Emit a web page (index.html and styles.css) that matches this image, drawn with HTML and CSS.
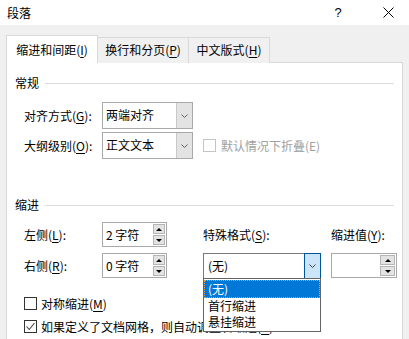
FILE: index.html
```html
<!DOCTYPE html>
<html lang="zh-CN">
<head>
<meta charset="utf-8">
<title>段落</title>
<link rel="stylesheet" href="styles.css">
</head>
<body>
<div class="titlebar">
  <span class="title">段落</span>
  <span class="help">?</span>
  <span class="close"><svg width="11" height="11" viewBox="0 0 11 11"><path d="M0.5 0.5 L10.5 10.5 M10.5 0.5 L0.5 10.5" stroke="#000" stroke-width="1" fill="none"/></svg></span>
</div>
<div class="dlg">
  <div class="tabs">
    <div class="tab active">缩进和间距(<u>I</u>)</div>
    <div class="tab t2">换行和分页(<u>P</u>)</div>
    <div class="tab t3">中文版式(<u>H</u>)</div>
  </div>
  <div class="panel">
    <div class="group-head"><span>常规</span><i class="rule"></i></div>
    <div class="form-row">
      <span class="lbl">对齐方式(<u>G</u>):</span>
      <div class="combo"><span class="val">两端对齐</span><span class="drop"><svg width="7" height="4" viewBox="0 0 7 4"><path d="M0.5 0.5 L3.5 3.5 L6.5 0.5" stroke="#606060" fill="none"/></svg></span></div>
    </div>
    <div class="form-row r2">
      <span class="lbl">大纲级别(<u>O</u>):</span>
      <div class="combo"><span class="val">正文文本</span><span class="drop"><svg width="7" height="4" viewBox="0 0 7 4"><path d="M0.5 0.5 L3.5 3.5 L6.5 0.5" stroke="#606060" fill="none"/></svg></span></div>
      <span class="check disabled"><span class="box"></span>默认情况下折叠(E)</span>
    </div>

    <div class="group-head g2"><span>缩进</span><i class="rule"></i></div>
    <div class="indent-grid">
      <span class="lbl">左侧(<u>L</u>):</span>
      <div class="spin"><span class="val">2 字符</span><span class="btns"><span class="up"></span><span class="dn"></span></span></div>
      <span class="lbl c4">特殊格式(<u>S</u>):</span>
      <span class="lbl c6">缩进值(<u>Y</u>):</span>

      <span class="lbl">右侧(<u>R</u>):</span>
      <div class="spin"><span class="val">0 字符</span><span class="btns"><span class="up"></span><span class="dn"></span></span></div>
      <div class="combo open c4">
        <span class="val">(无)</span>
        <span class="drop"><svg width="7" height="4" viewBox="0 0 7 4"><path d="M0.5 0.5 L3.5 3.5 L6.5 0.5" stroke="#404040" fill="none"/></svg></span>
        <ul class="droplist">
          <li class="sel">(无)</li>
          <li>首行缩进</li>
          <li>悬挂缩进</li>
        </ul>
      </div>
      <div class="spin wide c6"><span class="val"></span><span class="btns"><span class="up"></span><span class="dn"></span></span></div>
    </div>

    <span class="check c1"><span class="box"></span>对称缩进(<u>M</u>)</span>
    <span class="check c2"><span class="box"><svg width="11" height="11" viewBox="0 0 11 11"><path d="M1.5 5.5 L4.2 8.5 L9.5 2" stroke="#404040" stroke-width="1.1" fill="none"/></svg></span>如果定义了文档网格，则自动调整右缩进(<u>D</u>)</span>
  </div>
</div>
</body>
</html>
```

FILE: styles.css
```css
* { box-sizing: border-box; }
html, body { margin: 0; padding: 0; }
body {
  width: 409px;
  height: 339px;
  overflow: hidden;
  background: #f0f0f0;
  font-family: "Noto Sans CJK SC", "Microsoft YaHei UI", sans-serif;
  font-size: 12px;
  color: #000;
}
u { text-decoration: underline; text-underline-offset: 2px; }

.titlebar {
  height: 25px;
  background: #fff;
  display: flex;
  align-items: center;
  padding-left: 7px;
}
.title { flex: 1; line-height: 16px; }
.help {
  width: 16px;
  text-align: center;
  font-family: "Liberation Sans", sans-serif;
  font-size: 13px;
  margin-right: 27px;
}
.close { width: 30px; display: flex; justify-content: flex-start; padding-left: 10px; margin-right: 6px; }
.close svg { display: block; }

.dlg { padding: 10px 0 0 6px; }

.tabs { display: flex; align-items: flex-end; height: 28px; position: relative; z-index: 2; }
.tab {
  height: 26px;
  border: 1px solid #d9d9d9;
  border-bottom: none;
  background: #f0f0f0;
  line-height: 24px;
  text-align: center;
  width: 92px;
  margin-left: -1px;
}
.tab.active {
  height: 28px;
  background: #fff;
  margin-left: 0;
  line-height: 27px;
  position: relative;
  z-index: 2;
}
.tab.t3 { width: 82px; }

.panel {
  margin-top: -1px;
  width: 397px;
  height: 300px;
  border: 1px solid #d9d9d9;
  background: #fff;
  padding: 12px 0 0 8px;
  position: relative;
  z-index: 1;
}

.group-head {
  display: flex;
  align-items: center;
  height: 16px;
  line-height: 16px;
  padding-right: 8px;
}
.group-head .rule { flex: 1; height: 1px; background: #dcdcdc; margin-left: 6px; }
.group-head.g2 { margin-top: 38px; }

.form-row {
  display: flex;
  align-items: center;
  height: 27px;
  margin-top: 11px;
  padding-left: 9px;
}
.form-row.r2 { margin-top: 3px; }
.lbl { width: 78px; white-space: nowrap; line-height: 16px; }

.combo {
  width: 91px;
  height: 27px;
  border: 1px solid #a9a9a9;
  background: #fff;
  display: flex;
  align-items: stretch;
  position: relative;
}
.combo .val { flex: 1; padding-left: 3px; line-height: 24px; }
.combo .drop {
  width: 16px;
  background: #e3e3e3;
  border-left: 1px solid #c8c8c8;
  display: flex;
  align-items: center;
  justify-content: center;
}
.combo .drop svg { display: block; }

.check { display: flex; align-items: center; line-height: 16px; white-space: nowrap; }
.check .box {
  width: 13px;
  height: 13px;
  border: 1px solid #333;
  background: #fff;
  margin-right: 4px;
  display: flex;
  align-items: center;
  justify-content: center;
}
.check.disabled { color: #a0a0a0; margin-left: 10px; }
.check.disabled .box { border-color: #c4c4c4; margin-right: 5px; }

.indent-grid {
  display: grid;
  grid-template-columns: 78px 65px 36px 118px 10px 66px;
  grid-template-rows: 25px 25px;
  row-gap: 6px;
  margin-top: 9px;
  padding-left: 9px;
  align-items: center;
}
.indent-grid .c4 { grid-column: 4; }
.indent-grid .c6 { grid-column: 6; }

.spin {
  height: 25px;
  border: 1px solid #a9a9a9;
  background: #fff;
  display: flex;
  align-items: stretch;
}
.spin .val { flex: 1; padding-left: 3px; line-height: 23px; }
.spin .btns {
  width: 12px;
  margin: 1px 1px 1px 0;
  display: flex;
  flex-direction: column;
  gap: 1px;
}
.spin.wide .btns { width: 15px; }
.spin .up, .spin .dn {
  flex: 1;
  background: #e3e3e3;
  border: 1px solid #b4b4b4;
  display: flex;
  align-items: center;
  justify-content: center;
}
.spin .up::after {
  content: "";
  border-left: 3px solid transparent;
  border-right: 3px solid transparent;
  border-bottom: 3px solid #000;
}
.spin .dn::after {
  content: "";
  border-left: 3px solid transparent;
  border-right: 3px solid transparent;
  border-top: 3px solid #000;
}

.combo.open { width: 118px; height: 26px; border-color: #7a7a7a; }
.combo.open .val { line-height: 23px; padding-left: 4px; }
.combo.open .drop {
  width: 17px;
  background: #cce4f7;
  border: 1px solid #005499;
  margin: -1px -1px -1px 0;
}
.droplist {
  position: absolute;
  left: -1px;
  top: 100%;
  width: 118px;
  height: 54px;
  margin: 0;
  padding: 1px 0 0;
  list-style: none;
  background: #fff;
  border: 1px solid #646464;
  z-index: 5;
}
.droplist li { height: 16px; line-height: 16px; padding-left: 4px; }
.droplist li.sel {
  height: 18px;
  line-height: 16px;
  background: #0078d7;
  color: #fff;
  border: 1px dotted #f2a03c;
  padding-left: 3px;
}

.check.c1 { margin-top: 19px; padding-left: 9px; height: 13px; }
.check.c2 { margin-top: 10px; padding-left: 9px; height: 13px; }
```
